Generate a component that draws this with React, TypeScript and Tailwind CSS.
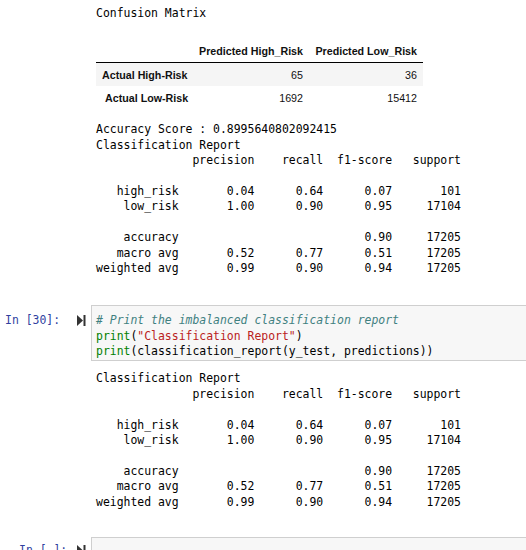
import React from "react";

const mono = { fontFamily: '"DejaVu Sans Mono", "Liberation Mono", monospace' };

const report = [
  "              precision    recall  f1-score   support",
  "",
  "   high_risk       0.04      0.64      0.07       101",
  "    low_risk       1.00      0.90      0.95     17104",
  "",
  "    accuracy                           0.90     17205",
  "   macro avg       0.52      0.77      0.51     17205",
  "weighted avg       0.99      0.90      0.94     17205",
];

function Pre({ lines }: { lines: string[] }) {
  return (
    <pre className="m-0 text-[11.45px] leading-[15.4px] text-[#000] whitespace-pre" style={mono}>
      {lines.join("\n")}
    </pre>
  );
}

function RunIcon() {
  return (
    <svg width="9" height="11" viewBox="0 0 9 11" className="block">
      <polygon points="0,0 6,5.5 0,11" fill="#333" />
      <rect x="6.5" y="0" width="2" height="11" fill="#333" />
    </svg>
  );
}

export default function App() {
  return (
    <div className="w-[526px] h-[550px] overflow-hidden bg-white relative">
      {/* Output 1 */}
      <div className="flex">
        <div className="w-[91px] shrink-0" />
        <div className="pl-[5px] pt-[6px]">
          <Pre lines={["Confusion Matrix"]} />
          <div className="mt-[18px] w-[327px] text-[10.7px] text-[#111] whitespace-nowrap" style={{ fontFamily: '"Liberation Sans", Arial, sans-serif' }}>
            <div className="flex h-[23px] items-center font-bold border-b border-black box-content">
              <div className="w-[97px] shrink-0" />
              <div className="w-[116px] shrink-0 text-right pr-[6px]">Predicted High_Risk</div>
              <div className="w-[114px] shrink-0 text-right pr-[6px]">Predicted Low_Risk</div>
            </div>
            <div className="flex h-[23px] items-center bg-[#f5f5f5]">
              <div className="w-[97px] shrink-0 pl-[6px] font-bold">Actual High-Risk</div>
              <div className="w-[116px] shrink-0 text-right pr-[6px]">65</div>
              <div className="w-[114px] shrink-0 text-right pr-[6px]">36</div>
            </div>
            <div className="flex h-[23px] items-center">
              <div className="w-[97px] shrink-0 pl-[9px] font-bold">Actual Low-Risk</div>
              <div className="w-[116px] shrink-0 text-right pr-[6px]">1692</div>
              <div className="w-[114px] shrink-0 text-right pr-[6px]">15412</div>
            </div>
          </div>
          <div className="mt-[13px]">
            <Pre lines={["Accuracy Score : 0.8995640802092415", "Classification Report", ...report]} />
          </div>
        </div>
      </div>

      {/* Input cell 30 */}
      <div className="flex mt-[29px]">
        <div className="w-[91px] shrink-0 flex justify-between pt-[8px] pl-[5px] pr-[5px]">
          <span className="text-[11.45px] leading-[15.33px] text-[#303F9F]" style={mono}>In [30]:</span>
          <span className="pt-[2px]"><RunIcon /></span>
        </div>
        <div className="flex-1 bg-[#f7f7f7] border border-[#cfcfcf] border-r-0 pl-[4px] pt-[7px] pb-[1px]">
          <pre className="m-0 text-[11.45px] leading-[15.33px] whitespace-pre" style={mono}>
            <span className="italic text-[#408080]"># Print the imbalanced classification report</span>
            {"\n"}
            <span className="text-[#008000]">print</span>(<span className="text-[#BA2121]">"Classification Report"</span>)
            {"\n"}
            <span className="text-[#008000]">print</span>(classification_report(y_test, predictions))
          </pre>
        </div>
      </div>

      {/* Output 30 */}
      <div className="flex">
        <div className="w-[91px] shrink-0" />
        <div className="pl-[5px] pt-[10px]">
          <Pre lines={["Classification Report", ...report]} />
        </div>
      </div>

      {/* Next input cell */}
      <div className="flex mt-[27px]">
        <div className="w-[91px] shrink-0 flex justify-between pt-[6px] pl-[5px] pr-[5px]">
          <span className="text-[11.45px] leading-[15.33px] text-[#303F9F] pl-[14px]" style={mono}>In [ ]:</span>
          <span className="pt-[2px]"><RunIcon /></span>
        </div>
        <div className="flex-1 h-[40px] bg-[#f7f7f7] border border-[#cfcfcf] border-r-0" />
      </div>
    </div>
  );
}
